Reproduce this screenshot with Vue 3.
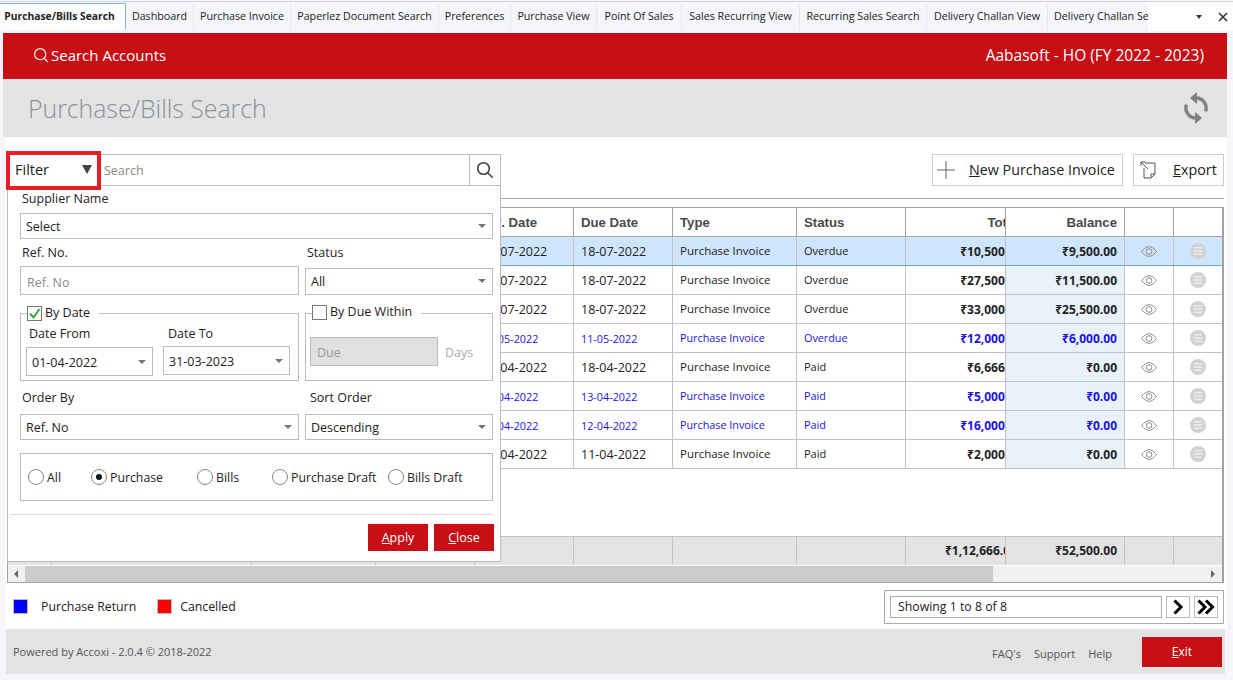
<script setup>
const tabs = [
  { name: 'Dashboard', w: 68 },
  { name: 'Purchase Invoice', w: 97 },
  { name: 'Paperlez Document Search', w: 148 },
  { name: 'Preferences', w: 72 },
  { name: 'Purchase View', w: 86 },
  { name: 'Point Of Sales', w: 85 },
  { name: 'Sales Recurring View', w: 118 },
  { name: 'Recurring Sales Search', w: 127 },
  { name: 'Delivery Challan View', w: 121 },
  { name: 'Delivery Challan Se', w: 100, last: true }
]

const rows = [
  { date: '08-07-2022', due: '18-07-2022', status: 'Overdue', total: '₹10,500.00', balance: '₹9,500.00', active: true },
  { date: '08-07-2022', due: '18-07-2022', status: 'Overdue', total: '₹27,500.00', balance: '₹11,500.00' },
  { date: '08-07-2022', due: '18-07-2022', status: 'Overdue', total: '₹33,000.00', balance: '₹25,500.00' },
  { date: '01-05-2022', due: '11-05-2022', status: 'Overdue', total: '₹12,000.00', balance: '₹6,000.00', blue: true },
  { date: '08-04-2022', due: '18-04-2022', status: 'Paid', total: '₹6,666.00', balance: '₹0.00' },
  { date: '03-04-2022', due: '13-04-2022', status: 'Paid', total: '₹5,000.00', balance: '₹0.00', blue: true },
  { date: '02-04-2022', due: '12-04-2022', status: 'Paid', total: '₹16,000.00', balance: '₹0.00', blue: true },
  { date: '01-04-2022', due: '11-04-2022', status: 'Paid', total: '₹2,000.00', balance: '₹0.00' }
]

const radios = [
  { label: 'All' },
  { label: 'Purchase', on: true },
  { label: 'Bills' },
  { label: 'Purchase Draft' },
  { label: 'Bills Draft' }
]
</script>

<template>
  <div class="page">
    <div class="tabbar">
      <div class="tab tab-active">Purchase/Bills Search</div>
      <div
        v-for="t in tabs"
        :key="t.name"
        class="tab"
        :class="{ 'tab-last': t.last }"
        :style="{ width: t.w + 'px' }"
      >{{ t.name }}</div>
      <div class="tab-tools">
        <span class="tab-caret"></span>
        <svg width="10" height="10" viewBox="0 0 10 10"><path d="M1 1l8 8M9 1l-8 8" stroke="#333" stroke-width="1.6" fill="none" /></svg>
      </div>
    </div>

    <div class="redbar">
      <div class="acc-search">
        <svg width="16" height="16" viewBox="0 0 16 16" fill="none" stroke="#fff" stroke-width="1.1"><circle cx="7.2" cy="7.2" r="5.6" /><path d="M11.2 11.4l3.6 3.6" /></svg>
        <span>Search Accounts</span>
      </div>
      <div>Aabasoft - HO (FY 2022 - 2023)</div>
    </div>

    <div class="titlebar">
      <h1>Purchase/Bills Search</h1>
      <svg width="26" height="34" viewBox="0 0 26 34">
        <g fill="none" stroke="#808080" stroke-width="3.4">
          <path d="M13 7A10 10 0 0 1 22.500 20.500" />
          <path d="M13 27A10 10 0 0 1 3.500 13.500" />
        </g>
        <path d="M7 7l7-6v12z" fill="#808080" />
        <path d="M19 27l-7-6v12z" fill="#808080" />
      </svg>
    </div>

    <div class="content">
      <div class="actions">
        <button class="tool-btn btn-new">
          <svg width="18" height="18" viewBox="0 0 18 18" stroke="#666" stroke-width="1"><path d="M9 0v18M0 9h18" /></svg>
          <span><u>N</u>ew Purchase Invoice</span>
        </button>
        <button class="tool-btn btn-export">
          <svg width="16" height="18" viewBox="0 0 16 18" fill="none" stroke="#555" stroke-width="1"><path d="M5 2h10v11l-4 4H4V7" /><path d="M11 17v-4h4" /><path d="M1 1l7 7M1 1h4M1 1v4" /></svg>
          <span><u>E</u>xport</span>
        </button>
      </div>
      <div class="rule"></div>

      <div class="grid">
        <div class="row head">
          <div class="cell" v-for="n in 4" :key="n"></div>
          <div class="cell head-date">Ref. Date</div>
          <div class="cell">Due Date</div>
          <div class="cell">Type</div>
          <div class="cell">Status</div>
          <div class="cell num clip"><span>Total</span></div>
          <div class="cell num">Balance</div>
          <div class="cell"></div>
          <div class="cell"></div>
        </div>
        <div
          v-for="(r, i) in rows"
          :key="i"
          class="row item"
          :class="{ active: r.active, blue: r.blue }"
        >
          <div class="cell" v-for="n in 4" :key="n"></div>
          <div class="cell date">{{ r.date }}</div>
          <div class="cell date">{{ r.due }}</div>
          <div class="cell">Purchase Invoice</div>
          <div class="cell stat">{{ r.status }}</div>
          <div class="cell num strong clip"><span>{{ r.total }}</span></div>
          <div class="cell num strong bal">{{ r.balance }}</div>
          <div class="cell icon">
            <svg width="16" height="11" viewBox="0 0 16 11" fill="none" stroke="#8d8d8d" stroke-width="1"><path d="M.7 5.500C3 2.200 5.400.7 8 .7s5 1.500 7.300 4.800C13 8.800 10.600 10.300 8 10.300S3 8.800.7 5.500z" /><circle cx="8" cy="5.500" r="2.800" /></svg>
          </div>
          <div class="cell icon">
            <svg width="16" height="16" viewBox="0 0 16 16"><circle cx="8" cy="8" r="8" fill="#d2d2d2" /><path d="M4 4.800h8M3.500 8h9M4 11.200h8" stroke="#ececec" stroke-width="1.500" /></svg>
          </div>
        </div>
        <div class="filler"></div>
        <div class="row foot">
          <div class="cell" v-for="n in 8" :key="n"></div>
          <div class="cell num strong clip clip-foot"><span>₹1,12,666.00</span></div>
          <div class="cell num strong">₹52,500.00</div>
          <div class="cell"></div>
          <div class="cell"></div>
        </div>
        <div class="scrollbar">
          <span class="arrow arrow-l"></span>
          <div class="thumb"></div>
          <span class="arrow arrow-r"></span>
        </div>
      </div>

      <div class="bottom">
        <div class="legend">
          <span class="swatch sw-blue"></span>
          <span class="legend-text">Purchase Return</span>
          <span class="swatch sw-red"></span>
          <span>Cancelled</span>
        </div>
        <div class="pager">
          <div class="pager-info">Showing 1 to 8 of 8</div>
          <div class="pager-btn">
            <svg width="14" height="16" viewBox="0 0 14 16" fill="none" stroke="#000" stroke-width="3"><path d="M3.500 1.500L10 8l-6.500 6.500" /></svg>
          </div>
          <div class="pager-btn">
            <svg width="20" height="16" viewBox="0 0 20 16" fill="none" stroke="#000" stroke-width="3"><path d="M2.500 1.500L9 8l-6.500 6.500M10 1.500L16.500 8 10 14.500" /></svg>
          </div>
        </div>
      </div>

      <!-- filter dropdown lies over the grid -->
      <div class="filter">
        <div class="filter-bar">
          <div class="filter-toggle">
            <span>Filter</span>
            <span class="filter-tri"></span>
          </div>
          <input class="filter-search" placeholder="Search" />
          <div class="filter-go">
            <svg width="18" height="18" viewBox="0 0 18 18" fill="none" stroke="#444" stroke-width="1.600"><circle cx="7.500" cy="7.500" r="5.800" /><path d="M11.800 11.800l5 5" /></svg>
          </div>
        </div>
        <div class="filter-body">
          <div class="lbl">Supplier Name</div>
          <div class="sel">Select<i></i></div>

          <div class="two two-ref">
            <div>
              <div class="lbl lbl-2">Ref. No.</div>
              <input class="txt" placeholder="Ref. No" />
            </div>
            <div>
              <div class="lbl lbl-2">Status</div>
              <div class="sel sel-status">All<i></i></div>
            </div>
          </div>

          <div class="two two-sets">
            <div class="set">
              <div class="legend-over">
                <span class="check">
                  <svg width="13" height="13" viewBox="0 0 13 13" fill="none" stroke="#3fa63f" stroke-width="2"><path d="M2 6.500l3.500 4L11.500 2" /></svg>
                </span>
                <span class="legend-label">By Date</span>
              </div>
              <div class="dates">
                <div>
                  <div class="lbl-date">Date From</div>
                  <div class="sel sel-date">01-04-2022<i></i></div>
                </div>
                <div class="date-to">
                  <div class="lbl-date">Date To</div>
                  <div class="sel sel-date">31-03-2023<i></i></div>
                </div>
              </div>
            </div>
            <div class="set">
              <div class="legend-over legend-due">
                <span class="check"></span>
                <span class="legend-label">By Due Within</span>
              </div>
              <div class="due">
                <div class="due-box">Due</div>
                <span>Days</span>
              </div>
            </div>
          </div>

          <div class="two">
            <div>
              <div class="lbl lbl-3">Order By</div>
              <div class="sel">Ref. No<i></i></div>
            </div>
            <div>
              <div class="lbl lbl-3 lbl-sort">Sort Order</div>
              <div class="sel">Descending<i></i></div>
            </div>
          </div>

          <div class="radios">
            <label v-for="o in radios" :key="o.label" class="radio">
              <span class="dot" :class="{ on: o.on }"></span>{{ o.label }}
            </label>
          </div>

          <div class="filter-rule"></div>
          <div class="filter-btns">
            <button class="red-btn"><u>A</u>pply</button>
            <button class="red-btn"><u>C</u>lose</button>
          </div>
        </div>
      </div>
    </div>

    <div class="footer">
      <div>Powered by Accoxi - 2.0.4 © 2018-2022</div>
      <div class="footer-right">
        <span class="flink flink-faq">FAQ's</span>
        <span class="flink flink-sup">Support</span>
        <span class="flink flink-help">Help</span>
        <button class="exit"><u>E</u>xit</button>
      </div>
    </div>
  </div>
</template>

<style>
html, body { margin: 0; background: #f4f6f9; }
</style>

<style scoped>
.page {
  width: 1233px;
  height: 680px;
  overflow: hidden;
  display: flex;
  flex-direction: column;
  background: #f4f6f9;
  font-family: "Open Sans", "Noto Sans", sans-serif;
  color: #222;
}

/* tabs */
.tabbar {
  box-sizing: border-box;
  display: flex;
  flex-shrink: 0;
  border-top: 1px solid #d4d4d4;
  margin-top: 1px;
  height: 32px;
  padding-top: 2px;
}
.tab {
  height: 26px;
  line-height: 25px;
  font-size: 10.700px;
  text-align: center;
  white-space: nowrap;
  overflow: hidden;
  box-sizing: border-box;
  border-right: 1px solid #e6e8ec;
  color: #222;
}
.tab-active {
  width: 126px;
  padding-right: 6px;
  background: #fff;
  font-weight: 700;
  font-size: 10.300px;
  border-right: 1px solid #7fb4e6;
  border-top: 1px solid #7fb4e6;
  margin-top: -1px;
  height: 27px;
}
.tab-last {
  text-align: left;
  padding-left: 6px;
  border-right: none;
}
.tab-tools {
  flex: 1;
  height: 29px;
  margin-top: -2px;
  background: #fff;
  display: flex;
  align-items: center;
  justify-content: flex-end;
  gap: 16px;
  padding-right: 5px;
}
.tab-caret {
  width: 0;
  height: 0;
  border-left: 3.500px solid transparent;
  border-right: 3.500px solid transparent;
  border-top: 4px solid #333;
}

.redbar {
  height: 46px;
  box-sizing: border-box;
  margin: 0 6px 0 3px;
  padding: 0 23px 2px 30px;
  background: #c70e15;
  color: #fff;
  font-size: 15.500px;
  display: flex;
  align-items: center;
  justify-content: space-between;
  flex-shrink: 0;
}
.acc-search {
  display: flex;
  align-items: center;
  gap: 2px;
  font-size: 15px;
}

.titlebar {
  height: 58px;
  margin: 0 6px 0 3px;
  padding: 0 18px 0 25px;
  background: #e3e3e3;
  display: flex;
  align-items: center;
  justify-content: space-between;
  flex-shrink: 0;
}
.titlebar h1 {
  margin: 0;
  font-size: 24.800px;
  font-weight: 300;
  color: #87929c;
}

/* main */
.content {
  position: relative;
  flex: 1;
  margin: 0 6px 0 5px;
  background: #fff;
  padding: 17px 3px 0 2px;
}
.actions {
  display: flex;
  justify-content: flex-end;
  gap: 10px;
  height: 32px;
}
.tool-btn {
  height: 32px;
  box-sizing: border-box;
  padding: 0 0 1px;
  background: #fff;
  border: 1px solid #ccc;
  font: inherit;
  font-size: 14.300px;
  color: #222;
  display: flex;
  align-items: center;
}
.btn-new { width: 191px; padding-left: 4px; gap: 14px; }
.btn-export { width: 91px; padding-left: 6px; gap: 17px; }
.tool-btn u { text-decoration-thickness: 1px; }
.rule {
  height: 1px;
  background: #aaa;
  margin-top: 12px;
}

.grid {
  margin-top: 8px;
  height: 376px;
  box-sizing: border-box;
  border: 1px solid #a3a3a3;
  border-right-width: 2px;
  display: flex;
  flex-direction: column;
  overflow: hidden;
}
.row {
  display: grid;
  grid-template-columns: 44px 200px 124px 99px 99px 99px 124px 109px 100px 119px 49px 49px;
  height: 29px;
  flex-shrink: 0;
  box-sizing: border-box;
  border-bottom: 1px solid #c2c2c2;
}
.cell {
  box-sizing: border-box;
  border-right: 1px solid #c2c2c2;
  padding: 0 7px;
  font-size: 11.500px;
  line-height: 28px;
  white-space: nowrap;
  overflow: hidden;
  color: #222;
}
.date { font-size: 12.500px; line-height: 30px; }
.stat { font-size: 11px; }
.head {
  border-bottom-color: #a3a3a3;
}
.head .cell {
  font-family: "Liberation Sans", Arial, sans-serif;
  font-weight: 700;
  font-size: 13.200px;
  line-height: 30px;
  color: #4a4a4a;
  border-right-color: #a3a3a3;
}
.head .head-date { padding-left: 5px; }
.num { text-align: right; padding-right: 7px; }
.strong { font-weight: 700; font-size: 12px; line-height: 30px; }
.clip { padding-right: 0; }
.clip span { display: block; margin-right: -17px; }
.head .clip span { margin-right: -13px; }
.clip-foot span { margin-right: -12px; }
.bal { background: #e9f1fb; }
.icon {
  display: flex;
  align-items: center;
  justify-content: center;
  padding: 0;
}
.item.active {
  background: #cfe5fc;
  border-bottom-color: #6aa8e0;
}
.item.active .bal { background: #cfe5fc; }
.item.blue .cell {
  color: #1a12e8;
  font-size: 10.800px;
}
.item.blue .strong { font-size: 12px; }
.filler { flex: 1; }
.foot {
  background: #e3e3e3;
  border-top: 1px solid #c2c2c2;
  border-bottom: none;
}
.foot .cell { color: #222; line-height: 28px; }
.scrollbar {
  height: 17px;
  flex-shrink: 0;
  background: #f0f0f0;
  display: flex;
  align-items: center;
  position: relative;
  border-top: 1px solid #fff;
  box-sizing: border-box;
}
.thumb {
  position: absolute;
  left: 17px;
  top: 0;
  bottom: 0;
  width: 968px;
  background: #cbcbcb;
}
.arrow {
  position: absolute;
  width: 0;
  height: 0;
  border-top: 4px solid transparent;
  border-bottom: 4px solid transparent;
}
.arrow-l { left: 6px; border-right: 4px solid #666; }
.arrow-r { right: 7px; border-left: 4px solid #666; }

.bottom {
  display: flex;
  justify-content: space-between;
  align-items: flex-start;
  margin-top: 7px;
}
.legend {
  display: flex;
  align-items: center;
  font-size: 12.300px;
  padding-left: 6px;
  height: 32px;
}
.legend-text { margin-right: 21px; }
.swatch {
  width: 15px;
  height: 15px;
  box-sizing: border-box;
  border: 1px solid #bbb;
  flex-shrink: 0;
}
.sw-blue { background: #00f; margin-right: 13px; }
.sw-red { background: #f00; margin-right: 8px; }
.pager {
  width: 340px;
  height: 34px;
  box-sizing: border-box;
  border: 1px solid #aaa;
  display: flex;
  align-items: center;
  padding-left: 5px;
  gap: 4px;
}
.pager-info {
  width: 272px;
  height: 22px;
  box-sizing: border-box;
  border: 1px solid #aaa;
  padding-left: 7px;
  font-size: 12.300px;
  line-height: 20px;
}
.pager-btn {
  width: 24px;
  height: 22px;
  box-sizing: border-box;
  border: 1px solid #bbb;
  display: flex;
  align-items: center;
  justify-content: center;
}

/* filter popup */
.filter {
  position: absolute;
  left: 2px;
  top: 17px;
  width: 494px;
  height: 408px;
  box-sizing: border-box;
  background: #fff;
  border: 1px solid #bbb;
  font-size: 12.500px;
}
.filter-bar {
  height: 31px;
  box-sizing: border-box;
  display: flex;
  border-bottom: 1px solid #bbb;
  position: relative;
}
.filter-toggle {
  position: absolute;
  left: -2px;
  top: -4px;
  width: 95px;
  height: 39px;
  box-sizing: border-box;
  border: 4px solid #ed1c24;
  background: #fff;
  padding: 0 5px 2px;
  font-size: 14.500px;
  display: flex;
  align-items: center;
  justify-content: space-between;
}
.filter-tri {
  width: 0;
  height: 0;
  border-left: 5px solid transparent;
  border-right: 5px solid transparent;
  border-top: 9px solid #444;
}
.filter-search {
  flex: 1;
  min-width: 0;
  margin-left: 96px;
  border: none;
  outline: none;
  padding: 0;
  font: inherit;
  font-size: 12.500px;
}
.filter-search::placeholder, .txt::placeholder { color: #8a8a8a; opacity: 1; }
.filter-go {
  width: 30px;
  border-left: 1px solid #bbb;
  display: flex;
  align-items: center;
  justify-content: center;
}
.filter-body {
  padding: 0 7px 0 12px;
}
.lbl {
  height: 27px;
  line-height: 26px;
  padding-left: 2px;
}
.lbl-2 { height: 27px; line-height: 28px; }
.lbl-3 { height: 33px; line-height: 34px; }
.lbl-sort { padding-left: 5px; }
.sel {
  position: relative;
  height: 26px;
  line-height: 26px;
  box-sizing: border-box;
  border: 1px solid #bbb;
  padding-left: 5px;
}
.sel i {
  position: absolute;
  right: 6px;
  top: 10px;
  width: 0;
  height: 0;
  border-left: 4px solid transparent;
  border-right: 4px solid transparent;
  border-top: 4px solid #777;
}
.two {
  display: grid;
  grid-template-columns: 279px 188px;
  gap: 6px;
}
.two-sets {
  margin-top: 18px;
}
.sel-status {
  height: 27px;
  margin-top: 2px;
}
.txt {
  width: 100%;
  height: 29px;
  box-sizing: border-box;
  border: 1px solid #bbb;
  padding: 3px 6px 0;
  outline: none;
  font: inherit;
}
.set {
  position: relative;
  height: 68px;
  box-sizing: border-box;
  border: 1px solid #bbb;
}
.legend-over {
  position: absolute;
  left: 6px;
  top: -9px;
  display: flex;
  align-items: center;
  gap: 3px;
  background: #fff;
  padding-right: 9px;
  height: 16px;
}
.legend-label { margin-top: -2px; }
.legend-due { top: -10px; }
.check {
  width: 15px;
  height: 15px;
  box-sizing: border-box;
  border: 1px solid #777;
  display: flex;
  align-items: center;
  justify-content: center;
  background: #fff;
}
.dates {
  display: grid;
  grid-template-columns: 127px 127px;
  gap: 10px;
  padding: 11px 0 0 5px;
}
.lbl-date {
  height: 22px;
  line-height: 17px;
  padding-left: 3px;
}
.date-to { margin-top: -1px; }
.date-to .lbl-date { padding-left: 5px; line-height: 19px; }
.sel-date { height: 29px; line-height: 29px; }
.sel-date i { top: 12px; }
.due {
  display: flex;
  align-items: center;
  gap: 7px;
  padding: 23px 0 0 4px;
  color: #aaa;
}
.due span { padding-top: 2px; }
.due-box {
  width: 128px;
  height: 29px;
  box-sizing: border-box;
  border: 1px solid #bbb;
  background: #e0e0e0;
  line-height: 29px;
  padding-left: 6px;
  color: #999;
}
.radios {
  margin-top: 13px;
  height: 48px;
  box-sizing: border-box;
  border: 1px solid #bbb;
  display: grid;
  grid-template-columns: 63px 106px 75px 116px 1fr;
  align-items: center;
  padding-left: 7px;
  font-size: 12.300px;
}
.radio {
  display: flex;
  align-items: center;
  gap: 3px;
}
.dot {
  width: 16px;
  height: 16px;
  box-sizing: border-box;
  border: 1px solid #888;
  border-radius: 50%;
  background: #fff;
  display: flex;
  align-items: center;
  justify-content: center;
}
.dot.on::after {
  content: '';
  width: 6px;
  height: 6px;
  border-radius: 50%;
  background: #111;
}
.filter-rule {
  height: 1px;
  background: #ddd;
  margin: 13px 0 0 -10px;
}
.filter-btns {
  display: flex;
  justify-content: flex-end;
  gap: 6px;
  margin: 9px -1px 0 0;
}
.red-btn {
  width: 60px;
  height: 27px;
  padding: 0;
  border: none;
  background: #c80f15;
  color: #fff;
  font: inherit;
  font-size: 12.500px;
}

/* footer */
.footer {
  height: 45px;
  flex-shrink: 0;
  margin: 0 8px 6px 6px;
  padding: 0 3px 0 7px;
  background: #e3e3e3;
  display: flex;
  align-items: center;
  justify-content: space-between;
  font-size: 11px;
  color: #555;
}
.footer-right {
  display: flex;
  align-items: center;
}
.flink { display: block; padding-top: 3px; }
.flink-faq { margin-right: 13px; }
.flink-sup { margin-right: 13px; }
.flink-help { margin-right: 30px; }
.exit {
  width: 80px;
  height: 30px;
  padding: 0;
  border: none;
  background: #c80f15;
  color: #fff;
  font: inherit;
  font-size: 12px;
}
</style>
